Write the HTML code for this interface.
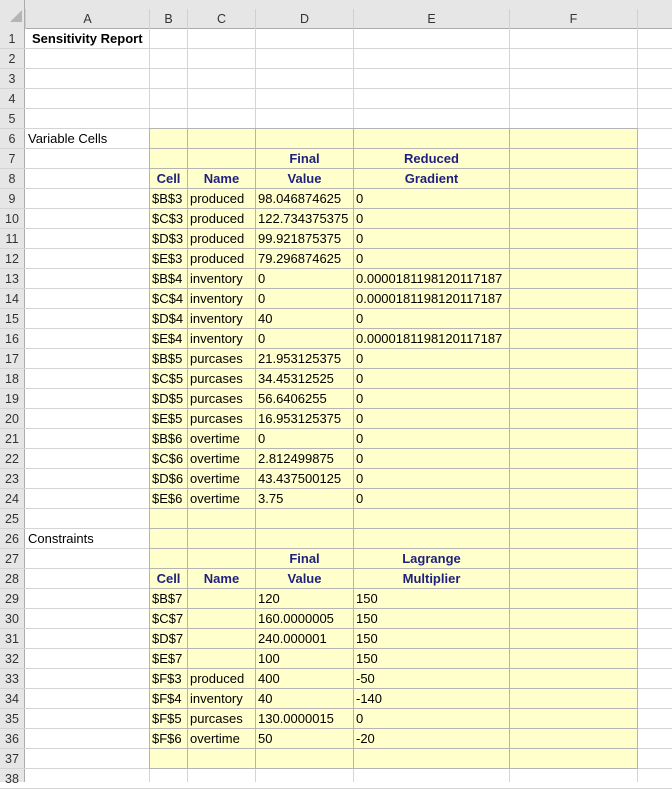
<!DOCTYPE html>
<html><head><style>
body{margin:0;width:672px;height:782px;overflow:hidden;background:#fff;font-family:"Liberation Sans",sans-serif;font-size:13px;color:#000}
.g{position:absolute;left:0;top:0}
.c{position:absolute;box-sizing:border-box;height:20px;line-height:19px;white-space:nowrap;padding-left:2px}
.h{position:absolute;text-align:center;color:#333;font-size:12.5px}
</style></head><body>
<div id="s" style="position:relative;width:672px;height:782px"></div>
<script>
const cols=[0,25,149,187,255,353,509,637,672];
const letters=['','A','B','C','D','E','F',''];
let h='';
// header bg
h+=`<div style="position:absolute;left:0;top:0;width:672px;height:29px;background:#e6e6e6;border-bottom:1px solid #ababab;box-sizing:border-box"></div>`;
h+=`<div style="position:absolute;left:0;top:0;width:25px;height:782px;background:#e6e6e6;border-right:1px solid #ababab;box-sizing:border-box"></div>`;
h+=`<div style="position:absolute;left:10px;top:10px;width:0;height:0;border-left:12px solid transparent;border-bottom:12px solid #b5b5b5"></div>`;
for(let i=1;i<8;i++){h+=`<div class="h" style="left:${cols[i]}px;top:9px;width:${cols[i+1]-cols[i]}px;height:20px;line-height:20px;border-left:1px solid #d0d0d0;box-sizing:border-box">${letters[i]}</div>`}
// yellow block
const ytop=29+20*5, ybot=29+20*37;
h+=`<div style="position:absolute;left:149px;top:${ytop}px;width:488px;height:${ybot-ytop}px;background:#ffffcc"></div>`;
// grid
for(let r=1;r<=38;r++){let y=29+20*r;h+=`<div style="position:absolute;left:0;top:${y-1}px;width:672px;height:1px;background:${r>=5&&r<=37?'#d4d4d4':'#d4d4d4'}"></div>`;
h+=`<div class="h" style="left:0;top:${y-20}px;width:24px;height:20px;line-height:20px">${r}</div>`;}
for(let i=2;i<8;i++){h+=`<div style="position:absolute;left:${cols[i]}px;top:29px;width:1px;height:753px;background:#d4d4d4"></div>`}
// yellow region borders
for(let r=5;r<=37;r++){let y=29+20*r;h+=`<div style="position:absolute;left:149px;top:${y-1}px;width:489px;height:1px;background:#b4b4b4"></div>`}
for(let i=2;i<8;i++){h+=`<div style="position:absolute;left:${cols[i]}px;top:${ytop-1}px;width:1px;height:${ybot-ytop+1}px;background:#b4b4b4"></div>`}
function cell(r,c,t,st=''){const y=29+20*(r-1);h+=`<div class="c" style="left:${cols[c]+1}px;top:${y}px;width:${cols[c+1]-cols[c]-1}px;${st}">${t}</div>`}
const hd='font-weight:bold;color:#1f1f80;text-align:center;padding:0';
cell(1,1,'Sensitivity Report','font-weight:bold;padding-left:6px');
cell(6,1,'Variable Cells');cell(26,1,'Constraints');
cell(7,4,'Final',hd);cell(7,5,'Reduced',hd);
cell(8,2,'Cell',hd);cell(8,3,'Name',hd);cell(8,4,'Value',hd);cell(8,5,'Gradient',hd);
cell(27,4,'Final',hd);cell(27,5,'Lagrange',hd);
cell(28,2,'Cell',hd);cell(28,3,'Name',hd);cell(28,4,'Value',hd);cell(28,5,'Multiplier',hd);
const g='0.0000181198120117187';
const v=[['$B$3','produced','98.046874625','0'],['$C$3','produced','122.734375375','0'],['$D$3','produced','99.921875375','0'],['$E$3','produced','79.296874625','0'],
['$B$4','inventory','0',g],['$C$4','inventory','0',g],['$D$4','inventory','40','0'],['$E$4','inventory','0',g],
['$B$5','purcases','21.953125375','0'],['$C$5','purcases','34.45312525','0'],['$D$5','purcases','56.6406255','0'],['$E$5','purcases','16.953125375','0'],
['$B$6','overtime','0','0'],['$C$6','overtime','2.812499875','0'],['$D$6','overtime','43.437500125','0'],['$E$6','overtime','3.75','0']];
v.forEach((a,i)=>{a.forEach((t,j)=>cell(9+i,2+j,t))});
const k=[['$B$7','','120','150'],['$C$7','','160.0000005','150'],['$D$7','','240.000001','150'],['$E$7','','100','150'],
['$F$3','produced','400','-50'],['$F$4','inventory','40','-140'],['$F$5','purcases','130.0000015','0'],['$F$6','overtime','50','-20']];
k.forEach((a,i)=>{a.forEach((t,j)=>cell(29+i,2+j,t))});
document.getElementById('s').innerHTML=h;
</script>
</body></html>
